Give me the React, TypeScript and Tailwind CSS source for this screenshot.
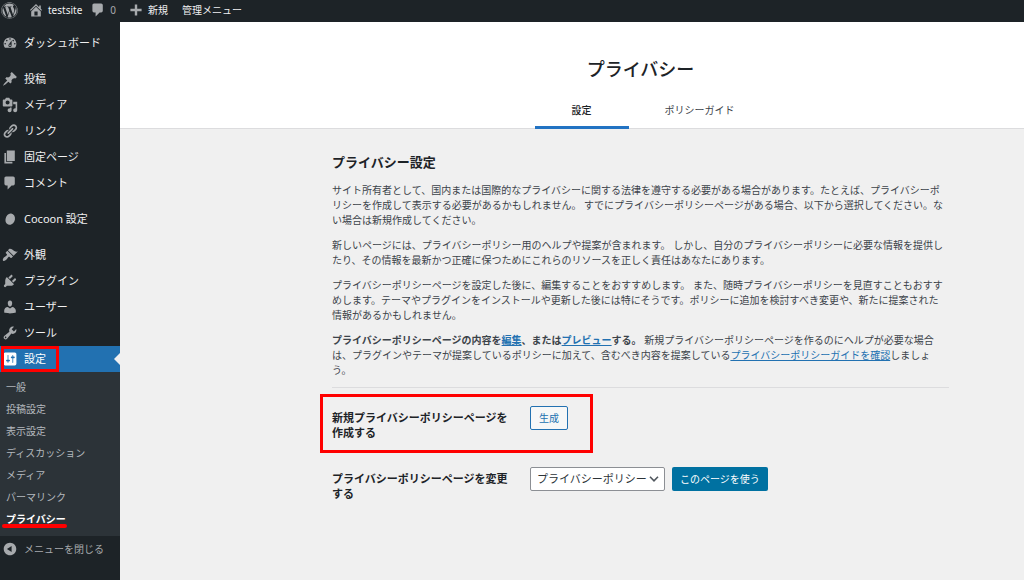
import { useState, type ReactNode } from 'react';
import { FaWordpress } from 'react-icons/fa';

const fontClass = "font-['Noto_Sans','Noto_Sans_CJK_JP',sans-serif]";

const ICONS = {
  home: 'M16 8.5l1.53 1.53-1.06 1.06L10 4.6l-6.47 6.49-1.06-1.06L10 2.5l4 4v-2h2v4zm-6-2.46l6 5.99V18H4v-5.97zM12 17v-5H8v5h4z',
  plus: 'M17 8.5v3h-5.5V17h-3v-5.5H3v-3h5.5V3h3v5.5z',
  dashboard:
    'M3.76 16h12.48c1.1-1.37 1.76-3.11 1.76-5 0-4.42-3.58-8-8-8s-8 3.58-8 8c0 1.89.66 3.63 1.76 5zM10 4c.55 0 1 .45 1 1s-.45 1-1 1-1-.45-1-1 .45-1 1-1zM6 6c.55 0 1 .45 1 1s-.45 1-1 1-1-.45-1-1 .45-1 1-1zm8 0c.55 0 1 .45 1 1s-.45 1-1 1-1-.45-1-1 .45-1 1-1zm-5.37 5.55L12 7v6c0 1.1-.9 2-2 2s-2-.9-2-2c0-.57.24-1.08.63-1.45zM4 10c.55 0 1 .45 1 1s-.45 1-1 1-1-.45-1-1 .45-1 1-1zm12 0c.55 0 1 .45 1 1s-.45 1-1 1-1-.45-1-1 .45-1 1-1zm-5 3c0-.55-.45-1-1-1s-1 .45-1 1 .45 1 1 1 1-.45 1-1z',
  pin: 'M10.44 3.02l1.82-1.82 6.36 6.35-1.83 1.82c-1.05-.68-2.48-.57-3.41.36l-.75.75c-.92.93-1.04 2.35-.35 3.41l-1.83 1.82-2.41-2.41-2.8 2.79c-.42.42-3.38 2.71-3.8 2.29s1.86-3.39 2.28-3.81l2.79-2.79L4.1 9.36l1.83-1.82c1.05.69 2.48.57 3.4-.36l.75-.75c.93-.92 1.05-2.35.36-3.41z',
  media:
    'M13 11V4c0-.55-.45-1-1-1h-1.67L9 1H5L3.67 3H2c-.55 0-1 .45-1 1v7c0 .55.45 1 1 1h10c.55 0 1-.45 1-1zM7 4.5c1.38 0 2.5 1.12 2.5 2.5S8.38 9.5 7 9.5 4.5 8.38 4.5 7 5.62 4.5 7 4.5zM14 6h5v10.5c0 1.38-1.12 2.5-2.5 2.5S14 17.88 14 16.5s1.12-2.5 2.5-2.5c.17 0 .34.02.5.05V9h-3V6zm-4 8.05V13h2v3.5c0 1.38-1.12 2.5-2.5 2.5S7 17.88 7 16.5 8.12 14 9.5 14c.17 0 .34.02.5.05z',
  link: 'M17.74 2.76c1.68 1.69 1.68 4.41 0 6.1l-1.53 1.52c-1.12 1.12-2.7 1.47-4.14 1.09l2.62-2.61.76-.77.76-.76c.84-.84.84-2.2 0-3.04-.84-.85-2.2-.85-3.04 0l-.77.76-3.38 3.38c-.37-1.44-.02-3.02 1.1-4.14l1.52-1.53c1.69-1.68 4.42-1.68 6.1 0zM8.59 13.43l5.34-5.34c.42-.42.42-1.1 0-1.52-.44-.43-1.13-.39-1.53 0l-5.33 5.34c-.42.42-.42 1.1 0 1.52.44.43 1.13.39 1.52 0zm-.76 2.29l4.14-4.15c.38 1.44.03 3.02-1.09 4.14l-1.52 1.53c-1.69 1.68-4.41 1.68-6.1 0-1.68-1.68-1.68-4.42 0-6.1l1.53-1.52c1.12-1.12 2.7-1.47 4.14-1.1l-4.14 4.15c-.85.84-.85 2.2 0 3.05.84.84 2.2.84 3.04 0z',
  page: 'M6 15V2h10v13H6zm-1 1h8v2H3V5h2v11z',
  comment: 'M5 2h9c1.1 0 2 .9 2 2v7c0 1.1-.9 2-2 2h-2l-5 5v-5H5c-1.1 0-2-.9-2-2V4c0-1.1.9-2 2-2z',
  cocoon: 'M11.5 3.2c3.3.6 5.2 3.4 4.7 7.2-.6 4.2-3.9 7.4-7.2 6.8-3.4-.6-5.2-3.8-4.5-7.6.7-4 3.8-7 7-6.400z',
  appearance:
    'M14.48 11.06L7.41 3.99l1.5-1.5c.5-.56 2.3-.47 3.51.32 1.21.8 1.43 1.28 2.91 2.1 1.18.64 2.45 1.26 4.45.85zm-.71.71L6.7 4.7 4.93 6.47c-.39.39-.39 1.02 0 1.41l1.06 1.06c.39.39.39 1.03 0 1.42-.6.6-1.43 1.11-2.21 1.69-.35.26-.7.53-1.01.84C1.43 14.23.4 16.08 1.4 17.07c.99 1 2.84-.03 4.18-1.36.31-.31.58-.66.85-1.02.57-.78 1.08-1.61 1.69-2.21.39-.39 1.02-.39 1.41 0l1.06 1.06c.39.39 1.02.39 1.41 0z',
  plugin:
    'M13.11 4.36L9.87 7.6 8 5.73l3.24-3.24c.35-.34 1.05-.2 1.56.32.52.51.66 1.21.31 1.55zm-8 1.77l.91-1.12 9.01 9.01-1.19.84c-.71.71-2.63 1.16-3.82 1.16H6.14L4.9 17.26c-.59.59-1.54.59-2.12 0-.59-.58-.59-1.53 0-2.12l1.24-1.24v-3.88c0-1.13.4-3.19 1.09-3.89zm7.26 3.97l3.24-3.24c.34-.35 1.04-.21 1.55.31.52.51.66 1.21.31 1.55l-3.24 3.25z',
  user: 'M10 9.25c-2.27 0-2.73-3.44-2.73-3.44C7 4.02 7.82 2 9.97 2c2.16 0 2.98 2.02 2.71 3.81 0 0-.41 3.44-2.68 3.44zm0 2.57L12.72 10c2.39 0 4.52 2.33 4.52 4.53v2.49s-3.65 1.13-7.24 1.13c-3.65 0-7.24-1.13-7.24-1.13v-2.49c0-2.25 1.94-4.48 4.47-4.48z',
  tool: 'M16.68 9.77c-1.34 1.34-3.3 1.67-4.95.99l-5.41 6.52c-.99.99-2.59.99-3.58 0s-.99-2.59 0-3.57l6.52-5.42c-.68-1.65-.35-3.61.99-4.95 1.28-1.28 3.12-1.62 4.72-1.06l-2.89 2.89 2.82 2.82 2.86-2.87c.53 1.58.18 3.39-1.08 4.65zM3.81 16.21c.4.39 1.04.39 1.43 0 .4-.4.4-1.04 0-1.43-.39-.4-1.03-.4-1.43 0-.39.39-.39 1.03 0 1.43z',
  settings:
    'M18 16V4c0-1.1-.9-2-2-2H4c-1.1 0-2 .9-2 2v12c0 1.1.9 2 2 2h12c1.1 0 2-.9 2-2zM8 11h1c.55 0 1 .45 1 1s-.45 1-1 1H8v1.5c0 .28-.22.5-.5.5s-.5-.22-.5-.5V13H6c-.55 0-1-.45-1-1s.45-1 1-1h1V5.5c0-.28.22-.5.5-.5s.5.22.5.5V11zm5-2h-1c-.55 0-1-.45-1-1s.45-1 1-1h1V5.5c0-.28.22-.5.5-.5s.5.22.5.5V7h1c.55 0 1 .45 1 1s-.45 1-1 1h-1v5.5c0 .28-.22.5-.5.5s-.5-.22-.5-.5V9z',
  collapse:
    'M10 2.16c4.33 0 7.84 3.51 7.84 7.84s-3.51 7.84-7.84 7.84S2.16 14.33 2.16 10 5.71 2.16 10 2.16zm2 11.72V6.12L6.18 9.97z',
};

type IconName = keyof typeof ICONS;

const MENU: { label: string; icon: IconName }[][] = [
  [{ label: 'ダッシュボード', icon: 'dashboard' }],
  [
    { label: '投稿', icon: 'pin' },
    { label: 'メディア', icon: 'media' },
    { label: 'リンク', icon: 'link' },
    { label: '固定ページ', icon: 'page' },
    { label: 'コメント', icon: 'comment' },
  ],
  [{ label: 'Cocoon 設定', icon: 'cocoon' }],
  [
    { label: '外観', icon: 'appearance' },
    { label: 'プラグイン', icon: 'plugin' },
    { label: 'ユーザー', icon: 'user' },
    { label: 'ツール', icon: 'tool' },
  ],
];

const SUBMENU = ['一般', '投稿設定', '表示設定', 'ディスカッション', 'メディア', 'パーマリンク', 'プライバシー'];

function Icon({ name, className = 'text-[#a7aaad]' }: { name: IconName; className?: string }) {
  return (
    <svg viewBox="0 0 20 20" width="16" height="16" fill="currentColor" className={`shrink-0 ${className}`} aria-hidden="true">
      <path fillRule="evenodd" d={ICONS[name]} />
    </svg>
  );
}

function AdminBar() {
  return (
    <header className="flex h-[22px] items-center bg-[#1d2327] pb-0.5 text-[10px] leading-5 whitespace-nowrap text-[#f0f0f1]">
      <a href="#wordpress" aria-label="WordPress" className="ml-px text-[#a7aaad]">
        <FaWordpress size={17} />
      </a>
      <a href="#site" className="ml-2.5 flex items-center gap-1">
        <Icon name="home" />
        testsite
      </a>
      <a href="#comments" className="ml-2 flex items-center gap-1 text-[#a7aaad]">
        <Icon name="comment" />
        0
      </a>
      <a href="#new" className="ml-3 flex items-center gap-1">
        <Icon name="plus" />
        新規
      </a>
      <a href="#admin-menu" className="ml-3.5">
        管理メニュー
      </a>
    </header>
  );
}

function MenuItem({ label, icon }: { label: string; icon: IconName }) {
  return (
    <li>
      <a href={`#${icon}`} className="flex h-[26px] items-center gap-1.5 pl-0.5 hover:text-[#72aee6]">
        <Icon name={icon} />
        {label}
      </a>
    </li>
  );
}

function Sidebar() {
  return (
    <nav className="w-30 shrink-0 bg-[#1d2327] pt-2 text-[11px] whitespace-nowrap text-[#f0f0f1]">
      <div className="flex flex-col gap-2.5">
        {MENU.map((group) => (
          <ul key={group[0].label}>
            {group.map((item) => (
              <MenuItem key={item.label} {...item} />
            ))}
          </ul>
        ))}
      </div>

      <a href="#settings" className="relative flex h-[26px] items-center gap-1.5 bg-[#2271b1] pl-0.5 text-white">
        <Icon name="settings" className="text-white" />
        設定
        <span className="absolute inset-y-0 left-px w-[58px] border-3 border-[#ff0000]" />
        <span className="absolute top-[7px] right-0 border-y-6 border-r-6 border-y-transparent border-r-[#f0f0f1]" />
      </a>

      <ul className="bg-[#2c3338] pt-1 pb-1.5 text-[10px] text-[#b4b9be]">
        {SUBMENU.map((label) => {
          const current = label === 'プライバシー';
          return (
            <li key={label} className="relative">
              <a
                href={`#${label}`}
                className={`flex h-[22px] items-center pl-1.5 ${current ? 'font-bold text-white' : 'hover:text-[#72aee6]'}`}
              >
                {label}
              </a>
              {current && <span className="absolute bottom-0.5 left-0.5 h-1 w-[65px] rounded-full bg-[#ff0000]" />}
            </li>
          );
        })}
      </ul>

      <button type="button" className="flex h-[26px] items-center gap-1.5 pl-0.5 text-[10px] text-[#a7aaad]">
        <Icon name="collapse" />
        メニューを閉じる
      </button>
    </nav>
  );
}

function Tab({ active, children, onClick }: { active: boolean; children: ReactNode; onClick: () => void }) {
  return (
    <button
      type="button"
      onClick={onClick}
      className={`mx-3 flex justify-center border-b-3 px-3 pt-1.5 pb-2 leading-[15px] ${
        active ? 'border-[#2273c3] font-medium text-[#1d2327]' : 'border-transparent text-[#3c434a]'
      }`}
    >
      {children}
    </button>
  );
}

function PageHeader() {
  const [tab, setTab] = useState('settings');
  return (
    <div className="border-b border-[#dcdcde] bg-white pl-[212px]">
      <div className="flex max-w-[617px] flex-col items-center pt-[33px]">
        <h1 className="text-[18px] leading-7 font-medium text-[#1d2327]">プライバシー</h1>
        <div className="-mb-px grid grid-cols-2 pt-[14px] text-[10px]">
          <Tab active={tab === 'settings'} onClick={() => setTab('settings')}>
            設定
          </Tab>
          <Tab active={tab === 'guide'} onClick={() => setTab('guide')}>
            ポリシーガイド
          </Tab>
        </div>
      </div>
    </div>
  );
}

function PrivacySettings() {
  return (
    <div className="pt-[23px] pl-[212px]">
      <div className="max-w-[617px]">
        <h2 className="text-[13px] leading-5 font-bold text-[#1d2327]">プライバシー設定</h2>
        <div className="mt-[11px] flex flex-col gap-2.5 pr-1 text-[10px] leading-[15px] text-[#3c434a]">
          <p>
            サイト所有者として、国内または国際的なプライバシーに関する法律を遵守する必要がある場合があります。たとえば、プライバシーポリシーを作成して表示する必要があるかもしれません。
            すでにプライバシーポリシーページがある場合、以下から選択してください。ない場合は新規作成してください。
          </p>
          <p>
            新しいページには、プライバシーポリシー用のヘルプや提案が含まれます。
            しかし、自分のプライバシーポリシーに必要な情報を提供したり、その情報を最新かつ正確に保つためにこれらのリソースを正しく責任はあなたにあります。
          </p>
          <p>
            プライバシーポリシーページを設定した後に、編集することをおすすめします。
            また、随時プライバシーポリシーを見直すこともおすすめします。テーマやプラグインをインストールや更新した後には特にそうです。ポリシーに追加を検討すべき変更や、新たに提案された情報があるかもしれません。
          </p>
          <p>
            <strong>
              プライバシーポリシーページの内容を
              <a href="#edit" className="text-[#2271b1] underline">編集</a>、または
              <a href="#preview" className="text-[#2271b1] underline">プレビュー</a>する。
            </strong>{' '}
            新規プライバシーポリシーページを作るのにヘルプが必要な場合は、プラグインやテーマが提案しているポリシーに加えて、含むべき内容を提案している
            <a href="#guide" className="text-[#2271b1] underline">プライバシーポリシーガイドを確認</a>しましょう。
          </p>
        </div>
        <hr className="mt-[9px] border-t border-[#dcdcde]" />

        <form className="mt-[18px] flex flex-col gap-[27px]" onSubmit={(e) => e.preventDefault()}>
          <div className="relative grid grid-cols-[182px_1fr] items-start gap-x-4">
            <label htmlFor="create-page" className="pt-1 text-[11px] leading-[15px] font-bold text-[#1d2327]">
              新規プライバシーポリシーページを作成する
            </label>
            <div className="flex">
              <button
                id="create-page"
                type="submit"
                className="h-6 rounded-xs border border-[#2271b1] bg-[#f6f7f7] px-2 text-[10px] text-[#2271b1]"
              >
                生成
              </button>
            </div>
            <span className="pointer-events-none absolute -top-3 -left-3 h-[59px] w-[273px] border-3 border-[#ff0000]" />
          </div>

          <div className="grid grid-cols-[182px_1fr] items-start gap-x-4">
            <label htmlFor="policy-page" className="pt-1 text-[11px] leading-[15px] font-bold text-[#1d2327]">
              プライバシーポリシーページを変更する
            </label>
            <div className="flex items-start gap-[7px]">
              <div className="relative flex">
                <select
                  id="policy-page"
                  className="h-6 w-[135px] appearance-none rounded-xs border border-[#8c8f94] bg-white pl-1.5 text-[11px] text-[#2c3338]"
                >
                  <option>プライバシーポリシー</option>
                </select>
                <svg
                  viewBox="0 0 10 6"
                  className="pointer-events-none absolute top-[9px] right-1.5 h-1.5 w-2.5 text-[#50575e]"
                  fill="none"
                  stroke="currentColor"
                  strokeWidth="1.6"
                  aria-hidden="true"
                >
                  <path d="M1 .8l4 4 4-4" />
                </svg>
              </div>
              <button type="submit" className="h-6 rounded-xs bg-[#0071a1] px-2 text-[10px] text-white">
                このページを使う
              </button>
            </div>
          </div>
        </form>
      </div>
    </div>
  );
}

export default function App() {
  return (
    <div lang="ja" className={`flex min-h-screen flex-col bg-[#f0f0f0] ${fontClass}`}>
      <AdminBar />
      <div className="flex flex-1">
        <Sidebar />
        <main className="min-w-0 flex-1">
          <PageHeader />
          <PrivacySettings />
        </main>
      </div>
    </div>
  );
}
